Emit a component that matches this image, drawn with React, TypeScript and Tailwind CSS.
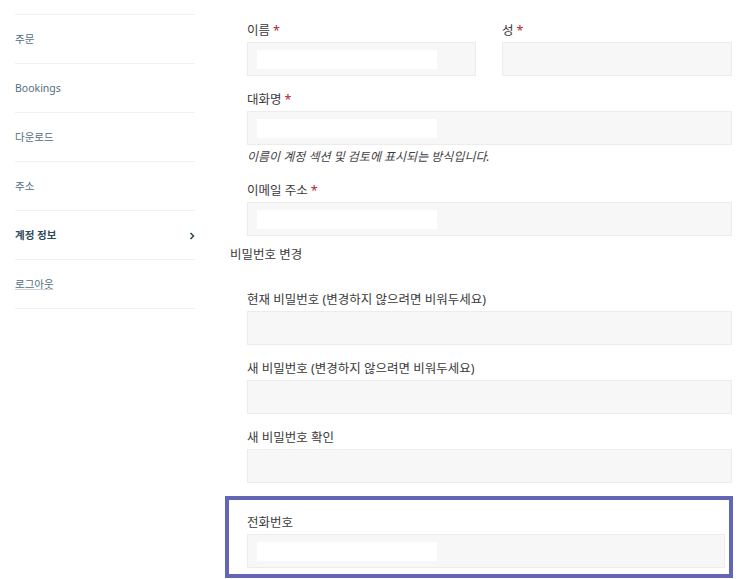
import React from "react";

const navItems = [
  { label: "주문" },
  { label: "Bookings" },
  { label: "다운로드" },
  { label: "주소" },
  { label: "계정 정보", active: true },
  { label: "로그아웃" },
];

function Label({ text, required }: { text: string; required?: boolean }) {
  return (
    <label className="block h-[20px] leading-[23px] mb-[3px] text-[12.5px] text-[#3a3a3a]">
      {text}
      {required && <span className="ml-[3px] text-[#b3262b]">*</span>}
    </label>
  );
}

function Field({ filled, className = "" }: { filled?: boolean; className?: string }) {
  return (
    <div className={`h-[34px] bg-[#f7f7f7] border border-[#ececec] flex items-center pl-[9px] ${className}`}>
      {filled && <div className="h-[19px] w-[180px] bg-white" />}
    </div>
  );
}

export default function App() {
  return (
    <div
      className="flex bg-white min-h-[579px] pl-[15px] overflow-hidden"
      style={{ fontFamily: '"Noto Sans", "Noto Sans CJK KR", sans-serif' }}
    >
      {/* Account navigation */}
      <nav className="w-[180px] pt-[14px] shrink-0">
        <ul className="border-t border-[#f1f1f1]">
          {navItems.map((item) => (
            <li
              key={item.label}
              className="h-[49px] border-b border-[#f1f1f1] flex items-center justify-between"
            >
              <span
                className={`text-[10.5px] pt-[2px] ${
                  item.active ? "font-bold text-[#2f4b5a]" : "text-[#52707f]"
                } ${item.label === "로그아웃" ? "underline decoration-[#c9d3d8]" : ""}`}
              >
                {item.label}
              </span>
              {item.active && (
                <svg className="w-[6px] h-[8px] mt-[2px] text-[#2f4b5a]" viewBox="0 0 6 8" fill="none" stroke="currentColor" strokeWidth={1.6}>
                  <path d="M1.5 1l3 3-3 3" />
                </svg>
              )}
            </li>
          ))}
        </ul>
      </nav>

      {/* Account details form */}
      <form className="ml-[30px] w-[508px] pt-[19px]">
        <div className="pl-[22px] pr-[1px]">
          <div className="flex gap-[26px]">
            <div className="w-[229px]">
              <Label text="이름" required />
              <Field filled />
            </div>
            <div className="flex-1">
              <Label text="성" required />
              <Field />
            </div>
          </div>

          <div className="mt-[12px]">
            <Label text="대화명" required />
            <Field filled />
            <p className="mt-[2px] h-[18px] leading-[20px] text-[12px] italic text-[#3f3f3f]">
              이름이 계정 섹션 및 검토에 표시되는 방식입니다.
            </p>
          </div>

          <div className="mt-[14px]">
            <Label text="이메일 주소" required />
            <Field filled />
          </div>
        </div>

        <fieldset className="mt-[7px]">
          <legend className="ml-[5px] h-[20px] leading-[23px] text-[12.5px] text-[#3a3a3a]">비밀번호 변경</legend>
          <div className="pl-[22px] pr-[1px] pt-[25px]">
            <Label text="현재 비밀번호 (변경하지 않으려면 비워두세요)" />
            <Field />
            <div className="mt-[12px]">
              <Label text="새 비밀번호 (변경하지 않으려면 비워두세요)" />
              <Field />
            </div>
            <div className="mt-[12px]">
              <Label text="새 비밀번호 확인" />
              <Field />
            </div>
          </div>
        </fieldset>

        <div className="mt-[13px] border-[4px] border-[#6366b4] pl-[18px] pr-[4px] pt-[11px] pb-[6px]">
          <Label text="전화번호" />
          <Field filled className="border-[#e3e0ea]" />
        </div>
      </form>
    </div>
  );
}
